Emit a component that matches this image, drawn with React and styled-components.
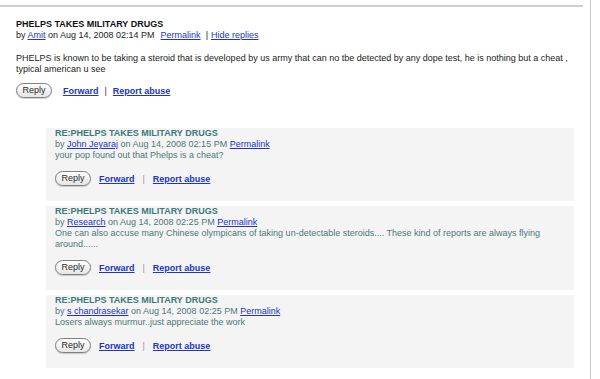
import React from 'react';
import styled, { createGlobalStyle } from 'styled-components';

const GlobalStyle = createGlobalStyle`
  body {
    margin: 0;
    background: #ffffff;
    font-family: "Liberation Sans", Arial, sans-serif;
  }
`;

const Page = styled.div`
  width: 591px;
  height: 379px;
  border-right: 1px solid #c8c8c8;
  padding-top: 5px;
  box-sizing: border-box;
  overflow: hidden;
`;

const Post = styled.div`
  margin-right: 7px;
  border-top: 2px solid #cfcfcf;
  padding: 12px 0 0 16px;
`;

const Title = styled.div`
  font-size: 9px;
  font-weight: bold;
  line-height: 11px;
  color: ${(p) => (p.$reply ? '#3b7a7a' : '#111111')};
`;

const Meta = styled.div`
  font-size: 9px;
  line-height: 11px;
  color: ${(p) => (p.$reply ? '#4d7878' : '#222222')};
`;

const Link = styled.a`
  color: #2035c8;
  text-decoration: underline;
  margin-left: ${(p) => p.$gap || 0}px;
`;

const Sep = styled.span`
  margin: 0 3px 0 5px;
`;

const Body = styled.p`
  margin: ${(p) => (p.$reply ? '0' : '12px 0 0')};
  font-size: 9px;
  line-height: 11px;
  color: ${(p) => (p.$reply ? '#4d7878' : '#222222')};
  padding-right: 10px;
`;

const Actions = styled.div`
  display: flex;
  align-items: center;
  margin-top: ${(p) => (p.$reply ? 10 : 8)}px;
  font-size: 9px;
`;

const ReplyButton = styled.button`
  width: 36px;
  height: 15px;
  padding: 0;
  border: 1px solid #7f7f7f;
  border-radius: 8px;
  background: linear-gradient(#ffffff, #e6e6e6);
  box-shadow: 0 1px 1px rgba(0, 0, 0, 0.18);
  font-family: "Liberation Sans", Arial, sans-serif;
  font-size: 9px;
  color: #2a2a2a;
  line-height: 13px;
`;

const ActionLink = styled.a`
  color: #2035c8;
  font-weight: bold;
  text-decoration: underline;
  margin-left: ${(p) => p.$gap || 0}px;
`;

const Divider = styled.span`
  color: ${(p) => (p.$reply ? '#999999' : '#333333')};
  margin: 0 ${(p) => (p.$reply ? 8 : 6)}px;
`;

const Replies = styled.div`
  display: flex;
  flex-direction: column;
  gap: 5px;
  margin: 30px 16px 0 46px;
`;

const ReplyBox = styled.div`
  background: #f4f4f4;
  padding: 0 0 15px 9px;
`;

const replies = [
  {
    author: 'John Jeyaraj',
    time: 'Aug 14, 2008 02:15 PM',
    text: 'your pop found out that Phelps is a cheat?',
  },
  {
    author: 'Research',
    time: 'Aug 14, 2008 02:25 PM',
    text:
      'One can also accuse many Chinese olympicans of taking un-detectable steroids.... These kind of reports are always flying around......',
  },
  {
    author: 's chandrasekar',
    time: 'Aug 14, 2008 02:25 PM',
    text: 'Losers always murmur..just appreciate the work',
  },
];

function ActionRow({ reply }) {
  return (
    <Actions $reply={reply}>
      <ReplyButton>Reply</ReplyButton>
      <ActionLink href="#" $gap={reply ? 8 : 11}>
        Forward
      </ActionLink>
      <Divider $reply={reply}>|</Divider>
      <ActionLink href="#">Report abuse</ActionLink>
    </Actions>
  );
}

export default function App() {
  return (
    <>
      <GlobalStyle />
      <Page>
        <Post>
          <Title>PHELPS TAKES MILITARY DRUGS</Title>
          <Meta>
            by <Link href="#">Amit</Link> on Aug 14, 2008 02:14 PM
            <Link href="#" $gap={6}>Permalink</Link>
            <Sep>|</Sep>
            <Link href="#">Hide replies</Link>
          </Meta>
          <Body>
            PHELPS is known to be taking a steroid that is developed by us army that can no tbe
            detected by any dope test, he is nothing but a cheat , typical american u see
          </Body>
          <ActionRow />
        </Post>
        <Replies>
          {replies.map((r) => (
            <ReplyBox key={r.author}>
              <Title $reply>RE:PHELPS TAKES MILITARY DRUGS</Title>
              <Meta $reply>
                by <Link href="#">{r.author}</Link> on {r.time} <Link href="#">Permalink</Link>
              </Meta>
              <Body $reply>{r.text}</Body>
              <ActionRow reply />
            </ReplyBox>
          ))}
        </Replies>
      </Page>
    </>
  );
}
